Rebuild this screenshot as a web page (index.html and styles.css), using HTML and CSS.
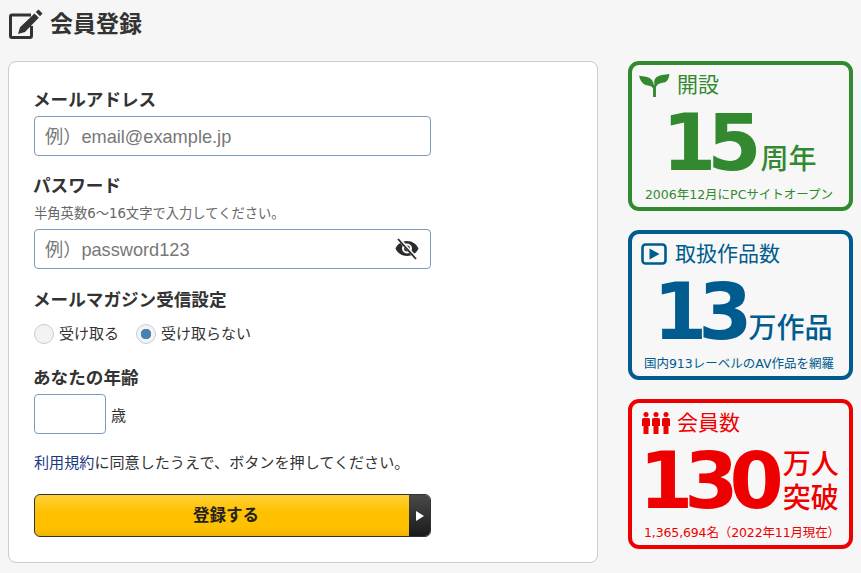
FILE: index.html
```html
<!DOCTYPE html>
<html lang="ja">
<head>
<meta charset="utf-8">
<title>会員登録</title>
<link rel="stylesheet" href="styles.css">
</head>
<body>
<h1 class="page-title">
  <svg class="title-icon" viewBox="0 0 34 30" width="34" height="30"><path d="M22 6H3a1.500 1.500 0 0 0-1.500 1.500V27A1.500 1.500 0 0 0 3 28.500H21A1.500 1.500 0 0 0 22.500 27V17" fill="none" stroke="#333" stroke-width="3"/><path d="M29.500 0.500l4 4-2.500 2.800-4.200-4.200zM25.500 4.500l4.300 4.300L16 23l-7 2 2-6.800z" fill="#333"/></svg>
  <span>会員登録</span>
</h1>
<div class="layout">
  <main class="card">
    <section class="field field-email">
      <div class="label">メールアドレス</div>
      <div class="input"><span class="placeholder">例）email@example.jp</span></div>
    </section>
    <section class="field field-pass">
      <div class="label">パスワード</div>
      <div class="hint">半角英数6～16文字で入力してください。</div>
      <div class="input">
        <span class="placeholder">例）password123</span>
        <svg class="eye" viewBox="0 0 24 24" width="24" height="24"><path fill="#2b2b2b" d="M12 5C6.500 5 2.300 8.300 0.500 12.500 2.300 16.700 6.500 20 12 20s9.700-3.300 11.500-7.500C21.700 8.300 17.500 5 12 5zm0 12.500a5 5 0 1 1 0-10 5 5 0 0 1 0 10z"/><circle cx="12" cy="12.500" r="3" fill="#2b2b2b"/><path d="M3.500 2.500l17.500 19.500" stroke="#f9f9f9" stroke-width="3.400"/><path d="M3 3l18 20" stroke="#2b2b2b" stroke-width="1.800"/></svg>
      </div>
    </section>
    <section class="field field-mail">
      <div class="label">メールマガジン受信設定</div>
      <div class="radios">
        <span class="radio-item"><span class="radio"></span>受け取る</span>
        <span class="radio-item"><span class="radio radio-on"></span>受け取らない</span>
      </div>
    </section>
    <section class="field field-age">
      <div class="label">あなたの年齢</div>
      <div class="age-row"><div class="input input-age"></div><span class="age-unit">歳</span></div>
    </section>
    <p class="terms"><span class="terms-link">利用規約</span>に同意したうえで、ボタンを押してください。</p>
    <div class="submit">
      <span class="submit-text">登録する</span>
      <span class="submit-arrow"><span class="arrow-shape"></span></span>
    </div>
  </main>
  <aside class="side">
    <div class="stat stat-green">
      <div class="stat-head">
        <svg class="sprout" viewBox="0 0 32 24" width="31" height="23"><path fill="#32892f" d="M14.500 24h3V14C19 9 24 9.500 27 8.500 30 7.500 31.500 3 31.500 0 27 1 20 0.500 17 4.500c-1.500 2-1.500 4-1 6.500-.2.400-.4.800-.5 1.200C15 8 13 4 8 3 5 2.400 2 2.500 0 1.500 .5 6 3 10 7 11.500c3 1 6 .5 7.500 3.500z"/></svg>
        <span class="stat-title">開設</span>
      </div>
      <div class="stat-main main-15"><span class="num">15</span><span class="unit">周年</span></div>
      <div class="stat-note">2006年12月にPCサイトオープン</div>
    </div>
    <div class="stat stat-blue">
      <div class="stat-head">
        <svg class="play" viewBox="0 0 26 22" width="26" height="22"><rect x="1.500" y="1.500" width="23" height="19" rx="3" fill="none" stroke="#005b8e" stroke-width="2.600"/><path d="M8.500 5.500l10 5.500-10 5.500z" fill="#005b8e"/></svg>
        <span class="stat-title">取扱作品数</span>
      </div>
      <div class="stat-main main-13"><span class="num">13</span><span class="unit">万作品</span></div>
      <div class="stat-note">国内913レーベルのAV作品を網羅</div>
    </div>
    <div class="stat stat-red">
      <div class="stat-head">
        <svg class="people" viewBox="0 0 28 22" width="28" height="22"><g fill="#ee0000"><circle cx="4" cy="2.500" r="2.500"/><path d="M1.500 6h5A1.500 1.500 0 0 1 8 7.500V14H6.500v8h-5V14H0V7.500A1.500 1.500 0 0 1 1.500 6z"/><circle cx="14" cy="2.500" r="2.500"/><path d="M11.500 6h5A1.500 1.500 0 0 1 18 7.500V14h-1.500v8h-5V14H10V7.500A1.500 1.500 0 0 1 11.500 6z"/><circle cx="24" cy="2.500" r="2.500"/><path d="M21.500 6h5A1.500 1.500 0 0 1 28 7.500V14h-1.500v8h-5V14H20V7.500A1.500 1.500 0 0 1 21.500 6z"/></g></svg>
        <span class="stat-title">会員数</span>
      </div>
      <div class="stat-main main-130"><span class="num">130</span><span class="unit unit-stack"><span>万人</span><span>突破</span></span></div>
      <div class="stat-note note-red">1,365,694名（2022年11月現在）</div>
    </div>
  </aside>
</div>
</body>
</html>
```
FILE: styles.css
```css
* { box-sizing: border-box; }
html, body { margin: 0; height: 100%; }
body {
  width: 861px;
  height: 573px;
  overflow: hidden;
  background: #f6f6f6;
  color: #333;
  font-family: "Liberation Sans", "Noto Sans CJK JP", sans-serif;
}
.page-title {
  display: flex;
  align-items: center;
  height: 61px;
  margin: 0;
  padding: 0 0 13px 9px;
  font-size: 23px;
  line-height: 30px;
  font-weight: 700;
  color: #333;
}
.title-icon { margin-right: 7px; }
.layout {
  display: flex;
  align-items: flex-start;
  padding-left: 8px;
}
.card {
  width: 590px;
  height: 502px;
  padding: 25px 25px 0;
  background: #fff;
  border: 1px solid #ccc;
  border-radius: 8px;
}
.label {
  margin-left: -1px;
  font-size: 17.600px;
  line-height: 26px;
  font-weight: 700;
  color: #333;
}
.hint {
  font-family: "DejaVu Sans", "Noto Sans CJK JP", sans-serif;
  font-size: 13.300px;
  line-height: 18px;
  color: #666;
}
.input {
  display: flex;
  align-items: center;
  justify-content: space-between;
  width: 397px;
  height: 40px;
  padding: 0 11px 2px 10px;
  background: #fff;
  border: 1px solid #7a9cbc;
  border-radius: 4px;
}
.placeholder {
  font-size: 18.200px;
  color: #777;
}
.field-email .label { margin-bottom: 3px; }
.field-pass { margin-top: 17px; }
.field-pass .hint { margin-top: 6px; margin-bottom: 6px; }
.field-mail { margin-top: 18px; }
.radios {
  display: flex;
  gap: 17px;
  margin-top: 10px;
  font-size: 15px;
  line-height: 22px;
  color: #333;
}
.radio-item { display: flex; align-items: center; }
.radio {
  width: 20px;
  height: 20px;
  margin-right: 5px;
  border: 1px solid #ccc;
  border-radius: 50%;
  background: #f3f3f3;
}
.radio-on {
  background: radial-gradient(circle, #4a80b4 0 5px, #f3f3f3 5.500px);
}
.field-age { margin-top: 20px; }
.field-age .label { margin-bottom: 3px; }
.age-row { display: flex; align-items: center; }
.input-age { width: 72px; }
.age-unit { margin-left: 5px; font-size: 15px; }
.terms {
  margin: 18px 0 0;
  font-size: 15.100px;
  line-height: 22px;
  color: #333;
}
.terms-link { color: #1a3a80; }
.submit {
  display: flex;
  width: 397px;
  height: 43px;
  margin-top: 20px;
  border: 1px solid #333;
  border-radius: 6px;
  overflow: hidden;
  background: linear-gradient(#ffd137 0, #ffc000 40%, #ffc000 80%, #efb400 100%);
}
.submit-text {
  flex: 1;
  padding-left: 8px;
  text-align: center;
  font-size: 16.500px;
  font-weight: 700;
  line-height: 41px;
  color: #222;
}
.submit-arrow {
  display: flex;
  align-items: center;
  justify-content: center;
  width: 21px;
  background: linear-gradient(#4a4a4a, #1a1a1a);
}
.arrow-shape {
  width: 0;
  height: 0;
  border-left: 8px solid #fff;
  border-top: 5px solid transparent;
  border-bottom: 5px solid transparent;
}
.side {
  display: flex;
  flex-direction: column;
  gap: 19px;
  width: 225px;
  margin-left: 30px;
}
.stat {
  height: 150px;
  padding: 6px 0 0 7px;
  border: 4px solid;
  border-radius: 11px;
  background: #f7f7f7;
}
.stat-head {
  display: flex;
  align-items: center;
  height: 28px;
  gap: 7px;
}
.stat-title { font-size: 21px; line-height: 28px; }
.play { margin-left: 2px; }
.stat-blue .stat-head { gap: 8px; }
.people { margin-left: 3px; }
.stat-main {
  display: flex;
  align-items: flex-end;
  height: 60px;
  margin-top: 14px;
  margin-left: -7px;
  white-space: nowrap;
}
.num {
  font-family: "DejaVu Sans", sans-serif;
  font-weight: 700;
  font-size: 78px;
  line-height: 60px;
  letter-spacing: -9px;
}
.unit {
  font-weight: 500;
  font-size: 28px;
  line-height: 36px;
  margin-bottom: -5px;
  margin-left: 8px;
}
.main-15 { padding-left: 30px; }
.main-13 { padding-left: 21px; }
.main-13 .unit { margin-left: 5px; }
.main-130 { padding-left: 7px; }
.stat-note {
  margin-left: -10px;
  margin-top: 13px;
  text-align: center;
  white-space: nowrap;
  font-family: "DejaVu Sans", "Noto Sans CJK JP", sans-serif;
  font-size: 12.500px;
  line-height: 18px;
}
.stat-note.note-red { margin-left: -4px; letter-spacing: -0.130px; }
.stat-green { color: #32892f; border-color: #32892f; }
.stat-blue { color: #005b8e; border-color: #005b8e; }
.stat-red { color: #ee0000; border-color: #ee0000; }
.main-130 .unit-stack {
  display: flex;
  flex-direction: column;
  line-height: 34px;
  margin-left: 8px;
}
```
